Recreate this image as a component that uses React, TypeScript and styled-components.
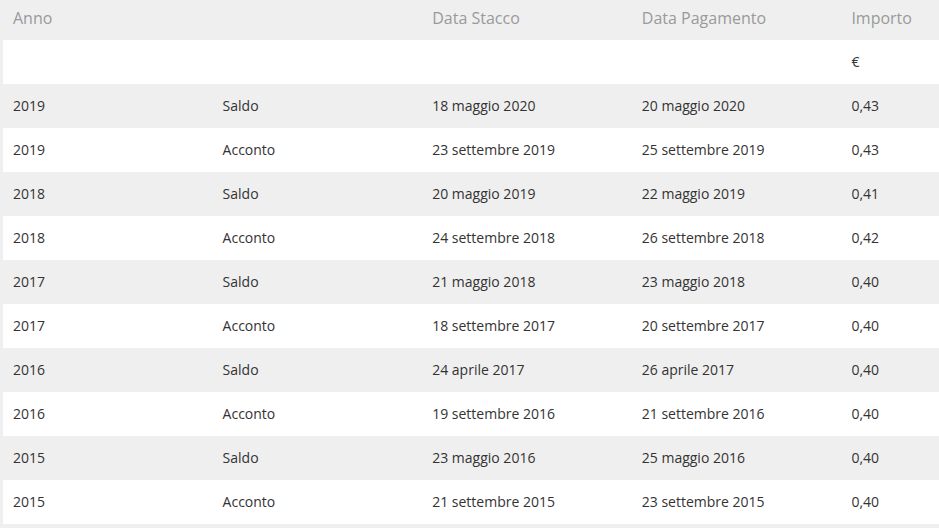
import React from "react";
import styled, { createGlobalStyle } from "styled-components";

const Global = createGlobalStyle`
  html, body { margin: 0; padding: 0; background: #efefef; }
  body { font-family: "Open Sans", "Noto Sans", sans-serif; }
`;

const Wrap = styled.div`
  background: #efefef;
  padding: 0 0 4px 3px;
  width: 939px;
  box-sizing: border-box;
  overflow: hidden;
`;

const Row = styled.div<{ $white?: boolean; $head?: boolean }>`
  display: grid;
  grid-template-columns: 209.6px 209.6px 209.6px 209.6px 1fr;
  height: ${(p) => (p.$head ? 40 : 44)}px;
  box-sizing: border-box;
  padding-bottom: ${(p) => (p.$head ? 5 : 2)}px;
  align-items: center;
  background: ${(p) => (p.$white ? "#ffffff" : "#efefef")};
  color: ${(p) => (p.$head ? "#9a9a9a" : "#333333")};
  font-size: ${(p) => (p.$head ? 16 : 14)}px;
`;

const Cell = styled.div`
  padding-left: 10px;
  white-space: nowrap;
`;

const data: [string, string, string, string, string][] = [
  ["2019", "Saldo", "18 maggio 2020", "20 maggio 2020", "0,43"],
  ["2019", "Acconto", "23 settembre 2019", "25 settembre 2019", "0,43"],
  ["2018", "Saldo", "20 maggio 2019", "22 maggio 2019", "0,41"],
  ["2018", "Acconto", "24 settembre 2018", "26 settembre 2018", "0,42"],
  ["2017", "Saldo", "21 maggio 2018", "23 maggio 2018", "0,40"],
  ["2017", "Acconto", "18 settembre 2017", "20 settembre 2017", "0,40"],
  ["2016", "Saldo", "24 aprile 2017", "26 aprile 2017", "0,40"],
  ["2016", "Acconto", "19 settembre 2016", "21 settembre 2016", "0,40"],
  ["2015", "Saldo", "23 maggio 2016", "25 maggio 2016", "0,40"],
  ["2015", "Acconto", "21 settembre 2015", "23 settembre 2015", "0,40"],
];

export default function App() {
  return (
    <Wrap>
      <Global />
      <Row $head>
        <Cell>Anno</Cell>
        <Cell></Cell>
        <Cell>Data Stacco</Cell>
        <Cell>Data Pagamento</Cell>
        <Cell>Importo</Cell>
      </Row>
      <Row $white>
        <Cell></Cell>
        <Cell></Cell>
        <Cell></Cell>
        <Cell></Cell>
        <Cell>€</Cell>
      </Row>
      {data.map((r, i) => (
        <Row key={i} $white={i % 2 === 1}>
          {r.map((c, j) => (
            <Cell key={j}>{c}</Cell>
          ))}
        </Row>
      ))}
    </Wrap>
  );
}
